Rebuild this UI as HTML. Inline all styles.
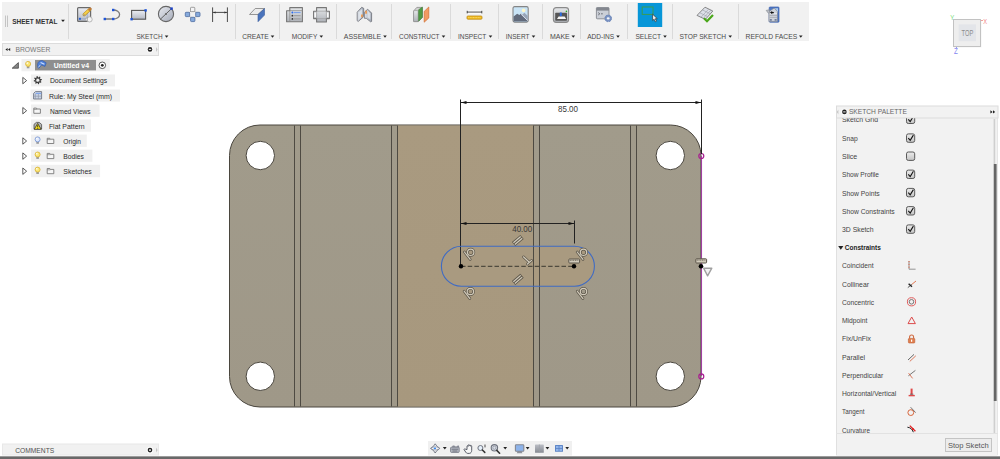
<!DOCTYPE html>
<html><head><meta charset="utf-8"><title>Sheet Metal Sketch</title>
<style>
html,body{margin:0;padding:0;background:#fff;}
body{width:1000px;height:459px;overflow:hidden;}
svg{display:block;font-family:"Liberation Sans", sans-serif;}
</style></head><body>
<svg width="1000" height="459" viewBox="0 0 1000 459">
<rect width="1000" height="459" fill="#fff"/>
<rect x="2" y="2" width="807" height="39" fill="#f1f1f1"/>
<line x1="68.5" y1="4" x2="68.5" y2="39" stroke="#dadada" stroke-width="1"/>
<line x1="235.5" y1="4" x2="235.5" y2="39" stroke="#dadada" stroke-width="1"/>
<line x1="279.5" y1="4" x2="279.5" y2="39" stroke="#dadada" stroke-width="1"/>
<line x1="336.5" y1="4" x2="336.5" y2="39" stroke="#dadada" stroke-width="1"/>
<line x1="391.5" y1="4" x2="391.5" y2="39" stroke="#dadada" stroke-width="1"/>
<line x1="450.5" y1="4" x2="450.5" y2="39" stroke="#dadada" stroke-width="1"/>
<line x1="498.5" y1="4" x2="498.5" y2="39" stroke="#dadada" stroke-width="1"/>
<line x1="542.5" y1="4" x2="542.5" y2="39" stroke="#dadada" stroke-width="1"/>
<line x1="580.5" y1="4" x2="580.5" y2="39" stroke="#dadada" stroke-width="1"/>
<line x1="627.5" y1="4" x2="627.5" y2="39" stroke="#dadada" stroke-width="1"/>
<line x1="672.5" y1="4" x2="672.5" y2="39" stroke="#dadada" stroke-width="1"/>
<line x1="738.5" y1="4" x2="738.5" y2="39" stroke="#dadada" stroke-width="1"/>
<line x1="5.5" y1="15.5" x2="5.5" y2="27" stroke="#c4c4c4"/><line x1="7.5" y1="15.5" x2="7.5" y2="27" stroke="#c4c4c4"/>
<text x="12.2" y="24.3" font-size="7.8" fill="#333" textLength="45.3" lengthAdjust="spacingAndGlyphs" font-weight="bold" >SHEET METAL</text>
<path d="M61.1 19.7h3.8l-1.9 2.4z" fill="#222"/>
<text x="136.5" y="38.8" font-size="7.4" fill="#4a4a4a" textLength="26.1" lengthAdjust="spacingAndGlyphs" >SKETCH</text>
<path d="M164.79999999999998 35.45h3.6l-1.8 2.3z" fill="#222"/>
<text x="242.2" y="38.8" font-size="7.4" fill="#4a4a4a" textLength="26.5" lengthAdjust="spacingAndGlyphs" >CREATE</text>
<path d="M270.7 35.45h3.6l-1.8 2.3z" fill="#222"/>
<text x="291.7" y="38.8" font-size="7.4" fill="#4a4a4a" textLength="25.6" lengthAdjust="spacingAndGlyphs" >MODIFY</text>
<path d="M319.5 35.45h3.6l-1.8 2.3z" fill="#222"/>
<text x="343.8" y="38.8" font-size="7.4" fill="#4a4a4a" textLength="37.4" lengthAdjust="spacingAndGlyphs" >ASSEMBLE</text>
<path d="M383.2 35.45h3.6l-1.8 2.3z" fill="#222"/>
<text x="399" y="38.8" font-size="7.4" fill="#4a4a4a" textLength="40.5" lengthAdjust="spacingAndGlyphs" >CONSTRUCT</text>
<path d="M441.7 35.45h3.6l-1.8 2.3z" fill="#222"/>
<text x="457.9" y="38.8" font-size="7.4" fill="#4a4a4a" textLength="28.4" lengthAdjust="spacingAndGlyphs" >INSPECT</text>
<path d="M488.7 35.45h3.6l-1.8 2.3z" fill="#222"/>
<text x="505.8" y="38.8" font-size="7.4" fill="#4a4a4a" textLength="23.7" lengthAdjust="spacingAndGlyphs" >INSERT</text>
<path d="M531.7 35.45h3.6l-1.8 2.3z" fill="#222"/>
<text x="550" y="38.8" font-size="7.4" fill="#4a4a4a" textLength="19.7" lengthAdjust="spacingAndGlyphs" >MAKE</text>
<path d="M571.5 35.45h3.6l-1.8 2.3z" fill="#222"/>
<text x="587.2" y="38.8" font-size="7.4" fill="#4a4a4a" textLength="27.0" lengthAdjust="spacingAndGlyphs" >ADD-INS</text>
<path d="M616.2 35.45h3.6l-1.8 2.3z" fill="#222"/>
<text x="635.4" y="38.8" font-size="7.4" fill="#4a4a4a" textLength="25.6" lengthAdjust="spacingAndGlyphs" >SELECT</text>
<path d="M663.2 35.45h3.6l-1.8 2.3z" fill="#222"/>
<text x="679.4" y="38.8" font-size="7.4" fill="#4a4a4a" textLength="46.8" lengthAdjust="spacingAndGlyphs" >STOP SKETCH</text>
<path d="M728.4000000000001 35.45h3.6l-1.8 2.3z" fill="#222"/>
<text x="745.5" y="38.8" font-size="7.4" fill="#4a4a4a" textLength="51.7" lengthAdjust="spacingAndGlyphs" >REFOLD FACES</text>
<path d="M799.0 35.45h3.6l-1.8 2.3z" fill="#222"/>
<defs>
<linearGradient id="gA" x1="0" y1="0" x2="0" y2="1"><stop offset="0" stop-color="#eceef3"/><stop offset="1" stop-color="#b4b9c4"/></linearGradient>
<linearGradient id="gB" x1="0" y1="0" x2="0" y2="1"><stop offset="0" stop-color="#e6e8ea"/><stop offset="1" stop-color="#aeb2b8"/></linearGradient>
<linearGradient id="gC" x1="0" y1="0" x2="1" y2="1"><stop offset="0" stop-color="#e8eaf0"/><stop offset="1" stop-color="#a4aab8"/></linearGradient>
</defs>
<!-- create sketch -->
<rect x="77.6" y="7.6" width="13" height="13.8" rx="1" fill="url(#gA)" stroke="#6a6a6a" stroke-width="1.2"/>
<path d="M80 18.8h7.2v-6" fill="none" stroke="#8aa0d0" stroke-width="0.7"/>
<rect x="78.9" y="17.8" width="2" height="2" fill="#2a5fd0"/>
<path d="M84.2 14.6l5.6-5.2" stroke="#b88a20" stroke-width="3.2" stroke-linecap="round"/>
<path d="M84.2 14.6l5.4-5" stroke="#f6d04a" stroke-width="2" stroke-linecap="round"/>
<path d="M89.3 9.8l1.2-1.1" stroke="#c07838" stroke-width="2.2" stroke-linecap="round"/>
<path d="M83.4 15.6l1.6-0.4l-1.2-1.2z" fill="#f0e0c0" stroke="#777" stroke-width="0.4"/>
<circle cx="89.6" cy="19.4" r="2.6" fill="#f4f4f4" stroke="#aaa" stroke-width="0.8"/>
<path d="M87.4 17.2v4.4l-2.2-2.2z" fill="#e8e8e8" stroke="#999" stroke-width="0.6"/>
<!-- line/arc -->
<path d="M104.8 19h8.4a6.4 4.5 0 0 0 0 -9" fill="none" stroke="#7a7a7a" stroke-width="1.3"/>
<rect x="103.6" y="17.8" width="2.4" height="2.4" fill="#1f55d8"/><rect x="112" y="17.8" width="2.4" height="2.4" fill="#1f55d8"/><rect x="112" y="8.8" width="2.4" height="2.4" fill="#1f55d8"/>
<!-- rectangle -->
<rect x="131.6" y="10.4" width="14" height="8.8" fill="url(#gA)" stroke="#555" stroke-width="1.1"/>
<rect x="130.4" y="18" width="2.4" height="2.4" fill="#1f55d8"/><rect x="144.4" y="9.2" width="2.4" height="2.4" fill="#1f55d8"/>
<!-- circle -->
<circle cx="166" cy="14" r="7.6" fill="url(#gC)" stroke="#666" stroke-width="1.1"/>
<path d="M160.4 19.2l11.2-10.6" stroke="#555" stroke-width="0.9"/>
<circle cx="166" cy="14" r="1" fill="#666"/>
<rect x="170.4" y="7.4" width="2.4" height="2.4" fill="#1a40c8"/>
<!-- pattern -->
<path d="M192.7 9.4l5.2 5l-5.1 5l-5.3-5z" fill="none" stroke="#8a8a8a" stroke-width="0.8"/>
<rect x="190.5" y="7.3" width="4.3" height="4.3" rx="0.8" fill="#f4f4f6" stroke="#8a8a8a" stroke-width="0.8"/>
<rect x="185.3" y="12.3" width="4.3" height="4.3" rx="0.8" fill="#86aadc" stroke="#4a6aa0" stroke-width="0.8"/>
<rect x="195.7" y="12.3" width="4.3" height="4.3" rx="0.8" fill="#86aadc" stroke="#4a6aa0" stroke-width="0.8"/>
<rect x="190.6" y="17.3" width="4.3" height="4.3" rx="0.8" fill="#86aadc" stroke="#4a6aa0" stroke-width="0.8"/>
<!-- dimension -->
<path d="M212.6 7.4v14.6M227.4 7.4v14.6M212.6 12.4h14.8" stroke="#4a4a4a" stroke-width="1" fill="none"/>
<path d="M213 12.4l2.6-1v2zM227 12.4l-2.6-1v2z" fill="#333"/>
<!-- create flange -->
<path d="M249.5 14.5l5.7-6h9.3l-6.5 6z" fill="#ececec" stroke="#8a8a8a" stroke-width="0.9" stroke-linejoin="round"/>
<path d="M258 14.5l6.5-6v6.6l-6.5 6.6z" fill="#4a74bc" stroke="#3a5c9c" stroke-width="0.6" stroke-linejoin="round"/>
<!-- modify 1 -->
<path d="M289.8 7.6h12.6v14.2h-15.8v-11h3.2z" fill="url(#gB)" stroke="#777" stroke-width="1.1" stroke-linejoin="round"/>
<path d="M289.8 10.8v11M289.8 10.6h12.6" stroke="#8a8a8a" stroke-width="0.7" fill="none"/>
<path d="M294 12.5h6.6" stroke="#7aa0e8" stroke-width="1.2"/><path d="M294 15.7h6.6M294 18.9h6.6" stroke="#999" stroke-width="1"/>
<circle cx="292.4" cy="12.5" r="1" fill="#2a6cf0"/><circle cx="292.4" cy="15.7" r="0.9" fill="#333"/><circle cx="292.4" cy="18.9" r="0.9" fill="#333"/>
<!-- modify 2 -->
<path d="M316.6 7.6h9.8v3.6h3v7.4h-3v3.4h-9.8v-3.4h-3v-7.4h3z" fill="url(#gB)" stroke="#777" stroke-width="1.1" stroke-linejoin="round"/>
<path d="M316.6 11.2v7.4M326.4 11.2v7.4M316.6 11.2h9.8M316.6 18.6h9.8" stroke="#999" stroke-width="0.6"/>
<rect x="314.4" y="12.6" width="1.6" height="4.6" fill="#fafafa"/><rect x="327" y="12.6" width="1.6" height="4.6" fill="#fafafa"/>
<!-- assemble -->
<defs><linearGradient id="gD" x1="0" y1="0" x2="1" y2="0"><stop offset="0" stop-color="#dfe3ea"/><stop offset="1" stop-color="#9aa2b0"/></linearGradient></defs>
<path d="M357.2 12.2l4.5-4.9l2 1v6.8l-0.8 2.4l-4.8 4l-0.9-0.8z" fill="url(#gD)" stroke="#6c6f76" stroke-width="0.8" stroke-linejoin="round"/>
<path d="M358.6 12.6l3.6-3.8v7.6l-3.6 3.4z" fill="#e4e8ee" opacity="0.8"/>
<path d="M364.4 12.2l3.3-3l3.9 3.9v8.3l-1 0.4l-4.3-3.5h-1.9z" fill="url(#gD)" stroke="#6c6f76" stroke-width="0.8" stroke-linejoin="round"/>
<path d="M367.6 10.6l2.8 3v6l-2.8-2.4z" fill="#e4e8ee" opacity="0.8"/>
<path d="M361.2 14.6h1.5v2.6h-1.5z" fill="#f0903a"/><path d="M365.3 10.8h1.5v3h-1.5z" fill="#f0903a"/>
<!-- construct -->
<path d="M413.6 11l3.2-3.6h5.6v10l-4 4.2h-4.8z" fill="#d0d0d0" stroke="#8a8a8a" stroke-width="0.8" stroke-linejoin="round"/>
<rect x="413.6" y="10.6" width="4.6" height="11" rx="1" fill="url(#gB)" stroke="#8a8a8a" stroke-width="0.6"/>
<path d="M418.6 9.8l3.8-2.8v10.4l-3.8 3.8z" fill="#4f9a44" stroke="#3c7c34" stroke-width="0.5"/>
<path d="M424.2 11.4l4.6-4.4v11l-4.6 4.2z" fill="#f19a62" stroke="#d07032" stroke-width="0.7" stroke-linejoin="round"/>
<!-- inspect -->
<rect x="466.2" y="10.4" width="16.4" height="3.4" rx="1" fill="#fbfbfb"/>
<path d="M467 12.1h15" stroke="#8a8a8a" stroke-width="1.5"/><path d="M467.2 10.8v2.6M481.8 10.8v2.6" stroke="#444" stroke-width="1"/>
<rect x="467" y="16" width="15" height="3.2" rx="0.9" fill="#f3bd22" stroke="#bf8a14" stroke-width="0.8"/>
<path d="M468.2 17.6h12.6" stroke="#fbe27a" stroke-width="0.7" stroke-dasharray="1 0.6"/>
<!-- insert -->
<rect x="513" y="6.6" width="15.2" height="15.6" rx="1.6" fill="#c9e4f6" stroke="#858585" stroke-width="1.1"/>
<path d="M513.6 16.6l3.6-2.8l2.2 1.2l1.6-1.4l6.6 7v1h-14z" fill="#626b7c"/>
<path d="M521.4 15.2l3-2.4l3.2 3v4.6z" fill="#98a5b8"/>
<path d="M520.8 13.6l6.8 7" stroke="#e8eef4" stroke-width="0.8"/>
<circle cx="523.6" cy="10.4" r="1.8" fill="#fdf6c8"/>
<!-- make -->
<rect x="553.4" y="7.6" width="15.2" height="14.8" rx="2.8" fill="url(#gB)" stroke="#8a8a8a" stroke-width="1.1"/>
<rect x="555.2" y="12.8" width="11.8" height="8" rx="0.8" fill="#565656"/>
<path d="M557 19l1.6-2.6h6l1.6 2.6z" fill="#f4f4f4"/>
<path d="M559.8 12.6h2v2.6l-1 1.4l-1-1.4z" fill="#2a6ce0"/>
<circle cx="566.4" cy="11.4" r="0.8" fill="#28a828"/>
<!-- add-ins -->
<rect x="596.4" y="7.6" width="12.6" height="11.2" rx="0.8" fill="#cbcfd7" stroke="#858890" stroke-width="0.9"/>
<rect x="596.4" y="7.6" width="12.6" height="3" fill="#83878f"/>
<path d="M598.2 12.6l1.6 1.2l-1.6 1.2M601 13.8h1.8" stroke="#5a5e66" stroke-width="0.8" fill="none"/>
<circle cx="608.2" cy="18.4" r="3.3" fill="#7a92c2" stroke="#6480b4" stroke-width="0.9" stroke-dasharray="1.6 1"/>
<ellipse cx="608.2" cy="18.4" rx="1.5" ry="1.1" fill="#f4f6fa"/>
<!-- select -->
<rect x="637.8" y="3" width="24.4" height="24" fill="#0796d8"/>
<rect x="642.2" y="7" width="10.8" height="7.4" fill="#0a9ae0" stroke="#3a9c50" stroke-width="1"/>
<path d="M652.6 14.2v6.4l1.5-1.4l1.2 2.6l1.2-0.6l-1.2-2.5h2z" fill="#f2f2f2" stroke="#333" stroke-width="0.7" stroke-linejoin="round"/>
<!-- stop sketch -->
<path d="M697 15.4l8-8.2l7.8 3.8l-7.4 8.4z" fill="#dde0e8" stroke="#7c7c7c" stroke-width="0.9" stroke-linejoin="round"/>
<path d="M699.7 12.7l8 4M702.4 9.9l7.9 3.9M700.9 17.3l7.8-8.2M703.2 18.4l7.7-8.3" stroke="#9a9ea8" stroke-width="0.6"/>
<path d="M704 18.2l3 3l6-6.2" fill="none" stroke="#4aa71a" stroke-width="2.2"/>
<!-- refold -->
<rect x="769.2" y="7" width="9.8" height="15.2" rx="0.8" fill="#4d78c6" stroke="#3c60aa" stroke-width="0.7"/>
<path d="M774.4 8.2h3.6v4.4h-3.6z" fill="#a8c8ee"/>
<path d="M769 11.4l2.6-1.6l2.6-1.8l3.2 3.6v9.8h-8.4z" fill="#cfd3da" stroke="#7d818a" stroke-width="0.6" stroke-linejoin="round"/>
<path d="M766.2 10.4l3.2-0.6l0.4 3.6l-1.6-0.4z" fill="#b9bdc6" stroke="#80848c" stroke-width="0.6" stroke-linejoin="round"/>
<path d="M769.6 15.4h7.4M769.6 17.4h7.4" stroke="#a2a6ae" stroke-width="0.8"/>
<path d="M769.6 13.6h7.4" stroke="#eceef2" stroke-width="0.8"/>
<path d="M770 12.6l2.2-1.7v1.1h1.6v1.2h-1.6v1.1z" fill="#111"/>
<rect x="769.8" y="19.2" width="2" height="1.4" fill="#5a6a8c"/><rect x="774.6" y="19.2" width="2" height="1.4" fill="#5a6a8c"/>

<rect x="2.5" y="43.5" width="156" height="12" fill="#f1f1f1" stroke="#dcdcdc" stroke-width="1"/>
<path d="M7.6 47.9v3.2l-2.2-1.6zM10.2 47.9v3.2l-2.2-1.6z" fill="#222"/>
<text x="15.4" y="52.2" font-size="7" fill="#777" textLength="34.9" lengthAdjust="spacingAndGlyphs" >BROWSER</text>
<circle cx="150" cy="49.4" r="3.4" fill="#fafafa"/><circle cx="150" cy="49.4" r="2.3" fill="#222"/><rect x="148.8" y="48.9" width="2.4" height="1" fill="#eee"/>
<path d="M156 47v5l1.6-2.5z" fill="#c4c4c4"/>
<rect x="21.5" y="59" width="88.3" height="12.3" fill="#f0f0f0"/>
<rect x="31" y="74.5" width="84" height="11.9" fill="#f0f0f0"/>
<rect x="30.5" y="89.5" width="89.5" height="12.1" fill="#f0f0f0"/>
<rect x="31" y="104.5" width="68.6" height="12.3" fill="#f0f0f0"/>
<rect x="31" y="119.5" width="60" height="12.2" fill="#f0f0f0"/>
<rect x="31" y="134.6" width="55.8" height="12.3" fill="#f0f0f0"/>
<rect x="31" y="149.6" width="61.4" height="12.2" fill="#f0f0f0"/>
<rect x="31" y="164.8" width="69.1" height="12.4" fill="#f0f0f0"/>
<rect x="35" y="60" width="61" height="10.4" fill="#8e8e8e"/>
<text x="53.8" y="68.1" font-size="7" fill="#fff" textLength="35.2" lengthAdjust="spacingAndGlyphs" font-weight="bold" >Untitled v4</text>
<path d="M18.4 62.6v5.6h-6.2z" fill="#888" stroke="#333" stroke-width="0.7"/>
<circle cx="102.3" cy="65.3" r="3.3" fill="#fff" stroke="#333" stroke-width="0.8"/><circle cx="102.3" cy="65.3" r="1.4" fill="#222"/>
<text x="49.9" y="83.4" font-size="7.4" fill="#2a2a2a" textLength="57.3" lengthAdjust="spacingAndGlyphs" >Document Settings</text>
<text x="48.9" y="98.5" font-size="7.4" fill="#2a2a2a" textLength="63.3" lengthAdjust="spacingAndGlyphs" >Rule: My Steel (mm)</text>
<text x="49.9" y="113.5" font-size="7.4" fill="#2a2a2a" textLength="40.8" lengthAdjust="spacingAndGlyphs" >Named Views</text>
<text x="48.9" y="128.6" font-size="7.4" fill="#2a2a2a" textLength="35.8" lengthAdjust="spacingAndGlyphs" >Flat Pattern</text>
<text x="63.3" y="143.8" font-size="7.4" fill="#2a2a2a" textLength="17.7" lengthAdjust="spacingAndGlyphs" >Origin</text>
<text x="63.3" y="158.8" font-size="7.4" fill="#2a2a2a" textLength="20.6" lengthAdjust="spacingAndGlyphs" >Bodies</text>
<text x="63.3" y="173.9" font-size="7.4" fill="#2a2a2a" textLength="28.5" lengthAdjust="spacingAndGlyphs" >Sketches</text>
<path d="M22.8 77.39999999999999v6.4l3.8-3.2z" fill="#fff" stroke="#333" stroke-width="0.8" stroke-linejoin="round"/>
<path d="M22.8 107.5v6.4l3.8-3.2z" fill="#fff" stroke="#333" stroke-width="0.8" stroke-linejoin="round"/>
<path d="M22.8 137.8v6.4l3.8-3.2z" fill="#fff" stroke="#333" stroke-width="0.8" stroke-linejoin="round"/>
<path d="M22.8 152.9v6.4l3.8-3.2z" fill="#fff" stroke="#333" stroke-width="0.8" stroke-linejoin="round"/>
<path d="M22.8 168.0v6.4l3.8-3.2z" fill="#fff" stroke="#333" stroke-width="0.8" stroke-linejoin="round"/>
<path d="M26.8 66.1h2.6v2.2h-2.6z" fill="#9a9a9a"/>
<circle cx="28.1" cy="63.9" r="2.5" fill="#fbe778" stroke="#d8b030" stroke-width="0.8"/>
<circle cx="27.3" cy="63.1" r="0.9" fill="#fff" opacity="0.8"/>
<path d="M37.6 64.2c0.4-2.6 2.6-4 4.8-3.6l3.8 2.2l-1.2 3.6l-3.6-1.4l-2.4 3.2l-1.2-0.6z" fill="#4f80d8" stroke="#2f58a8" stroke-width="0.6" stroke-linejoin="round"/>
<path d="M40.6 62.4l3.8 1.8" stroke="#cfe0ff" stroke-width="1.1"/>
<path d="M38.4 67.4l2-2.6" stroke="#e8e8e8" stroke-width="0.8"/>
<path d="M41.70 78.92L41.89 79.89L40.69 80.42L40.56 81.10L41.46 82.05L40.91 82.87L39.69 82.40L39.11 82.79L39.08 84.10L38.11 84.29L37.58 83.09L36.90 82.96L35.95 83.86L35.13 83.31L35.60 82.09L35.21 81.51L33.90 81.48L33.71 80.51L34.91 79.98L35.04 79.30L34.14 78.35L34.69 77.53L35.91 78.00L36.49 77.61L36.52 76.30L37.49 76.11L38.02 77.31L38.70 77.44L39.65 76.54L40.47 77.09L40.00 78.31L40.39 78.89z" fill="#3a3a3a"/>
<circle cx="37.8" cy="80.2" r="1.9" fill="#f0f0f0"/><circle cx="37.8" cy="80.2" r="1.9" fill="none" stroke="#3a3a3a" stroke-width="0.5"/>
<path d="M35.4 91.6h6.2v7.4h-8v-5.6z" fill="#c9d3e4" stroke="#707784" stroke-width="0.9" stroke-linejoin="round"/>
<path d="M35.4 93.6v5.4M38.4 93.6v5.4M33.8 96.2h7.6" stroke="#8b93a4" stroke-width="0.6"/><path d="M35.8 93.4h5.4" stroke="#7da3ea" stroke-width="1.1"/>
<path d="M33.8 108.1h2.6l0.6 0.9h3.4v4.3h-6.6z" fill="#f6f6f6" stroke="#6a6a6a" stroke-width="0.8" stroke-linejoin="round"/>
<path d="M33.8 109.39999999999999h3.2" stroke="#6a6a6a" stroke-width="0.6"/>
<path d="M34 129v-4.6l2.4-2h2.8l2.4 2v4.6z" fill="#b8b8b8" stroke="#4a4a4a" stroke-width="0.8" stroke-linejoin="round"/>
<path d="M37.7 123.4l3.5 5.9h-7z" fill="#f8e21c" stroke="#222" stroke-width="0.7" stroke-linejoin="round"/>
<path d="M37.7 125.2v2.2M37.7 128v0.7" stroke="#111" stroke-width="0.8"/>
<path d="M36.300000000000004 141.6h2.6v2.2h-2.6z" fill="#9a9a9a"/>
<circle cx="37.6" cy="139.4" r="2.5" fill="#dfe8fb" stroke="#6f8fd0" stroke-width="0.8"/>
<circle cx="36.800000000000004" cy="138.6" r="0.9" fill="#fff" opacity="0.8"/>
<path d="M36.300000000000004 156.7h2.6v2.2h-2.6z" fill="#9a9a9a"/>
<circle cx="37.6" cy="154.5" r="2.5" fill="#fbe778" stroke="#d8b030" stroke-width="0.8"/>
<circle cx="36.800000000000004" cy="153.7" r="0.9" fill="#fff" opacity="0.8"/>
<path d="M36.300000000000004 171.79999999999998h2.6v2.2h-2.6z" fill="#9a9a9a"/>
<circle cx="37.6" cy="169.6" r="2.5" fill="#fbe778" stroke="#d8b030" stroke-width="0.8"/>
<circle cx="36.800000000000004" cy="168.79999999999998" r="0.9" fill="#fff" opacity="0.8"/>
<path d="M47.2 138.3h2.6l0.6 0.9h3.4v4.3h-6.6z" fill="#f6f6f6" stroke="#6a6a6a" stroke-width="0.8" stroke-linejoin="round"/>
<path d="M47.2 139.6h3.2" stroke="#6a6a6a" stroke-width="0.6"/>
<path d="M47.2 153.4h2.6l0.6 0.9h3.4v4.3h-6.6z" fill="#f6f6f6" stroke="#6a6a6a" stroke-width="0.8" stroke-linejoin="round"/>
<path d="M47.2 154.7h3.2" stroke="#6a6a6a" stroke-width="0.6"/>
<path d="M47.2 168.5h2.6l0.6 0.9h3.4v4.3h-6.6z" fill="#f6f6f6" stroke="#6a6a6a" stroke-width="0.8" stroke-linejoin="round"/>
<path d="M47.2 169.79999999999998h3.2" stroke="#6a6a6a" stroke-width="0.6"/>
<rect x="2.5" y="444" width="156" height="11" fill="#f1f1f1" stroke="#e8e8e8" stroke-width="1"/>
<text x="15.2" y="452.6" font-size="7.2" fill="#505050" textLength="39" lengthAdjust="spacingAndGlyphs" >COMMENTS</text>
<circle cx="150" cy="450.1" r="3.4" fill="#fafafa"/><circle cx="150" cy="450.1" r="2.3" fill="#222"/><rect x="149.1" y="449.3" width="1.8" height="1.6" fill="#eee"/>
<path d="M156 447.6v5l1.6-2.5z" fill="#c4c4c4"/>
<defs><linearGradient id="pg" x1="0" y1="0" x2="0" y2="1"><stop offset="0" stop-color="#a19b8b"/><stop offset="1" stop-color="#9f9888"/></linearGradient><linearGradient id="tg" x1="0" y1="0" x2="0" y2="1"><stop offset="0" stop-color="#a99a80"/><stop offset="1" stop-color="#a7987e"/></linearGradient></defs>
<rect x="229.5" y="125" width="471.5" height="282" rx="30.5" ry="30.5" fill="url(#pg)" stroke="#4a463e" stroke-width="1"/>
<rect x="397.5" y="125.5" width="136" height="281" fill="url(#tg)"/>
<rect x="441.4" y="246.3" width="153" height="40" rx="20" fill="#a99a80"/>
<line x1="294.5" y1="125.5" x2="294.5" y2="406.5" stroke="#4e4a42" stroke-width="1"/>
<line x1="300.5" y1="125.5" x2="300.5" y2="406.5" stroke="#4e4a42" stroke-width="1"/>
<line x1="391.5" y1="125.5" x2="391.5" y2="406.5" stroke="#4e4a42" stroke-width="1"/>
<line x1="397.5" y1="125.5" x2="397.5" y2="406.5" stroke="#4e4a42" stroke-width="1"/>
<line x1="533.5" y1="125.5" x2="533.5" y2="406.5" stroke="#4e4a42" stroke-width="1"/>
<line x1="539.5" y1="125.5" x2="539.5" y2="406.5" stroke="#4e4a42" stroke-width="1"/>
<line x1="630.5" y1="125.5" x2="630.5" y2="406.5" stroke="#4e4a42" stroke-width="1"/>
<line x1="636.5" y1="125.5" x2="636.5" y2="406.5" stroke="#4e4a42" stroke-width="1"/>
<circle cx="260.3" cy="155.5" r="14.2" fill="#fff" stroke="#4a463e" stroke-width="1"/>
<circle cx="670.3" cy="155.5" r="14.2" fill="#fff" stroke="#4a463e" stroke-width="1"/>
<circle cx="260.3" cy="376.3" r="14.2" fill="#fff" stroke="#4a463e" stroke-width="1"/>
<circle cx="670.3" cy="376.3" r="14.2" fill="#fff" stroke="#4a463e" stroke-width="1"/>
<line x1="701.5" y1="156" x2="701.5" y2="376" stroke="#a13fa1" stroke-width="1.1"/>
<circle cx="701.3" cy="156" r="2.5" fill="none" stroke="#a81c90" stroke-width="1.2"/><circle cx="701.3" cy="376.4" r="2.5" fill="none" stroke="#a81c90" stroke-width="1.2"/>
<g stroke="#222" stroke-width="1" fill="none"><line x1="460.5" y1="99.5" x2="460.5" y2="266"/><line x1="701.5" y1="99.5" x2="701.5" y2="154"/><line x1="460.5" y1="102.5" x2="701.5" y2="102.5"/><line x1="460.5" y1="223.5" x2="574" y2="223.5"/><line x1="574.5" y1="220.5" x2="574.5" y2="243.5"/></g>
<path d="M461 102.5l5.5-1.5v3zM701 102.5l-5.5-1.5v3zM461 223.5l5.5-1.5v3zM574 223.5l-5.5-1.5v3z" fill="#111"/>
<text x="558" y="111.6" font-size="8.3" fill="#383838" textLength="20" lengthAdjust="spacingAndGlyphs" >85.00</text>
<text x="512.2" y="232.4" font-size="8.3" fill="#383838" textLength="20" lengthAdjust="spacingAndGlyphs" >40.00</text>
<rect x="441.4" y="246.3" width="153" height="40" rx="20" fill="none" stroke="#3f6bc4" stroke-width="1.1"/>
<line x1="461" y1="266.3" x2="574" y2="266.3" stroke="#3a382f" stroke-width="1" stroke-dasharray="4.5 2.2"/>
<circle cx="461" cy="266.3" r="2.2" fill="#000"/><circle cx="574" cy="266.3" r="2.2" fill="#000"/><circle cx="701" cy="266.3" r="2.3" fill="#000"/>
<g fill="none" stroke="#5c564a" stroke-width="2.6" stroke-linecap="round"><circle cx="470.7" cy="252.3" r="3.2"/><path d="M464.4 252.0l5.8 7.4"/></g>
<g fill="none" stroke="#d2cbbb" stroke-width="1.2" stroke-linecap="round"><circle cx="470.7" cy="252.3" r="3.2"/><path d="M464.4 252.0l5.8 7.4"/></g>
<g fill="none" stroke="#5c564a" stroke-width="2.6" stroke-linecap="round"><circle cx="583.5" cy="252.3" r="3.2"/><path d="M577.2 252.0l5.8 7.4"/></g>
<g fill="none" stroke="#d2cbbb" stroke-width="1.2" stroke-linecap="round"><circle cx="583.5" cy="252.3" r="3.2"/><path d="M577.2 252.0l5.8 7.4"/></g>
<g fill="none" stroke="#5c564a" stroke-width="2.6" stroke-linecap="round"><circle cx="470.4" cy="291.5" r="3.2"/><path d="M464.09999999999997 291.2l5.8 7.4"/></g>
<g fill="none" stroke="#d2cbbb" stroke-width="1.2" stroke-linecap="round"><circle cx="470.4" cy="291.5" r="3.2"/><path d="M464.09999999999997 291.2l5.8 7.4"/></g>
<g fill="none" stroke="#5c564a" stroke-width="2.6" stroke-linecap="round"><circle cx="583.5" cy="291.5" r="3.2"/><path d="M577.2 291.2l5.8 7.4"/></g>
<g fill="none" stroke="#d2cbbb" stroke-width="1.2" stroke-linecap="round"><circle cx="583.5" cy="291.5" r="3.2"/><path d="M577.2 291.2l5.8 7.4"/></g>
<path d="M513.6 244.0L522.0 237.0" stroke="#5c564a" stroke-width="5.2"/>
<path d="M513.40 242.67L520.73 236.56" stroke="#d2cbbb" stroke-width="1.3"/>
<path d="M514.87 244.44L522.20 238.33" stroke="#d2cbbb" stroke-width="1.3"/>
<path d="M513.6 283.0L522.0 275.8" stroke="#5c564a" stroke-width="5.2"/>
<path d="M513.38 281.67L520.72 275.38" stroke="#d2cbbb" stroke-width="1.3"/>
<path d="M514.88 283.42L522.22 277.13" stroke="#d2cbbb" stroke-width="1.3"/>
<g fill="none" stroke="#5c564a" stroke-width="2.6" stroke-linecap="round"><path d="M523.4 256.8l5.6 5.2M527.4 264l4.2-3.6"/></g>
<g fill="none" stroke="#d2cbbb" stroke-width="1.2" stroke-linecap="round"><path d="M523.4 256.8l5.6 5.2M527.4 264l4.2-3.6"/></g>
<rect x="568.8" y="259" width="10.8" height="4" rx="0.8" fill="#d2cbbb" stroke="#5c564a" stroke-width="1"/>
<path d="M569.8 260.3h8.8" stroke="#5c564a" stroke-width="0.9" stroke-dasharray="1 0.7"/>
<rect x="695.8" y="258.8" width="10.8" height="4.2" rx="0.8" fill="#d2cbbb" stroke="#5c564a" stroke-width="1"/>
<path d="M696.8 260.1h8.8" stroke="#5c564a" stroke-width="0.9" stroke-dasharray="1 0.7"/>
<path d="M703.6 268.2h8.2l-4.2 7.6z" fill="#f2f2f2" stroke="#a0a0a0" stroke-width="1.4" stroke-linejoin="round"/>
<rect x="954" y="20.2" width="27.4" height="27.2" fill="#e4e4e4" opacity="0.6"/><rect x="953.5" y="19.5" width="27" height="27" fill="#eeeeee" stroke="#c2c2c2" stroke-width="1"/>
<rect x="958.6" y="24.4" width="17.4" height="16.8" fill="#e3e5e9"/>
<text x="961.6" y="35.7" font-size="8.2" fill="#8c8c8c" textLength="11.7" lengthAdjust="spacingAndGlyphs" >TOP</text>
<text x="950.3" y="20" font-size="7.2" fill="#78dc78" textLength="4" lengthAdjust="spacingAndGlyphs" >Y</text>
<text x="983.3" y="24.4" font-size="7.4" fill="#f07f7f" textLength="3.8" lengthAdjust="spacingAndGlyphs" >X</text>
<text x="954" y="53.8" font-size="8.8" fill="#8484f0" textLength="3.8" lengthAdjust="spacingAndGlyphs" >Z</text>
<line x1="981" y1="20.5" x2="983" y2="20.5" stroke="#f0a0a0"/><line x1="956.5" y1="47" x2="956.5" y2="49" stroke="#9a9af0"/>
<rect x="836" y="118" width="161.5" height="338" fill="#f2f2f2"/>
<line x1="836.5" y1="118" x2="836.5" y2="455" stroke="#e0e0e0"/><line x1="997.5" y1="118" x2="997.5" y2="455" stroke="#e6e6e6"/>
<rect x="836.5" y="106" width="161.5" height="12" fill="#f2f2f2" stroke="#dcdcdc" stroke-width="1"/>
<path d="M838.4 109.4v5l-1.6-2.5z" fill="#c4c4c4"/>
<circle cx="844.4" cy="111.9" r="3.3" fill="#fafafa"/><circle cx="844.4" cy="111.9" r="2.3" fill="#222"/><rect x="843.2" y="111.4" width="2.4" height="1" fill="#eee"/>
<text x="848.9" y="114.3" font-size="7" fill="#666" textLength="58" lengthAdjust="spacingAndGlyphs" >SKETCH PALETTE</text>
<path d="M990.4 110.3v3.2l2.2-1.6zM993 110.3v3.2l2.2-1.6z" fill="#222"/>
<defs><linearGradient id="cb" x1="0" y1="0" x2="0" y2="1"><stop offset="0" stop-color="#ececec"/><stop offset="1" stop-color="#c4c4c4"/></linearGradient></defs>
<clipPath id="pc"><rect x="836" y="118.2" width="162" height="314.8"/></clipPath><g clip-path="url(#pc)">
<text x="842" y="122.4" font-size="7.3" fill="#444" textLength="36" lengthAdjust="spacingAndGlyphs" >Sketch Grid</text>
<rect x="906.5" y="115.1" width="8.2" height="8.4" rx="1.8" fill="url(#cb)" stroke="#5a5a5a" stroke-width="1"/>
<path d="M908.3 119.3l1.9 2.2l3.2-5.2" fill="none" stroke="#111" stroke-width="1.1"/>
<text x="842" y="141.2" font-size="7.3" fill="#444" textLength="15.6" lengthAdjust="spacingAndGlyphs" >Snap</text>
<rect x="906.5" y="133.9" width="8.2" height="8.4" rx="1.8" fill="url(#cb)" stroke="#5a5a5a" stroke-width="1"/>
<path d="M908.3 138.1l1.9 2.2l3.2-5.2" fill="none" stroke="#111" stroke-width="1.1"/>
<text x="842" y="159.3" font-size="7.3" fill="#444" textLength="15.2" lengthAdjust="spacingAndGlyphs" >Slice</text>
<rect x="906.5" y="152.0" width="8.2" height="8.4" rx="1.8" fill="url(#cb)" stroke="#5a5a5a" stroke-width="1"/>
<text x="842" y="177.4" font-size="7.3" fill="#444" textLength="37" lengthAdjust="spacingAndGlyphs" >Show Profile</text>
<rect x="906.5" y="170.1" width="8.2" height="8.4" rx="1.8" fill="url(#cb)" stroke="#5a5a5a" stroke-width="1"/>
<path d="M908.3 174.29999999999998l1.9 2.2l3.2-5.2" fill="none" stroke="#111" stroke-width="1.1"/>
<text x="842" y="195.7" font-size="7.3" fill="#444" textLength="37.7" lengthAdjust="spacingAndGlyphs" >Show Points</text>
<rect x="906.5" y="188.4" width="8.2" height="8.4" rx="1.8" fill="url(#cb)" stroke="#5a5a5a" stroke-width="1"/>
<path d="M908.3 192.6l1.9 2.2l3.2-5.2" fill="none" stroke="#111" stroke-width="1.1"/>
<text x="842" y="213.9" font-size="7.3" fill="#444" textLength="52.7" lengthAdjust="spacingAndGlyphs" >Show Constraints</text>
<rect x="906.5" y="206.6" width="8.2" height="8.4" rx="1.8" fill="url(#cb)" stroke="#5a5a5a" stroke-width="1"/>
<path d="M908.3 210.79999999999998l1.9 2.2l3.2-5.2" fill="none" stroke="#111" stroke-width="1.1"/>
<text x="842" y="232.2" font-size="7.3" fill="#444" textLength="31.6" lengthAdjust="spacingAndGlyphs" >3D Sketch</text>
<rect x="906.5" y="224.9" width="8.2" height="8.4" rx="1.8" fill="url(#cb)" stroke="#5a5a5a" stroke-width="1"/>
<path d="M908.3 229.1l1.9 2.2l3.2-5.2" fill="none" stroke="#111" stroke-width="1.1"/>
<path d="M838.2 245.9h5.2l-2.6 3.9z" fill="#222"/>
<text x="844.8" y="250.3" font-size="7.2" fill="#222" textLength="36" lengthAdjust="spacingAndGlyphs" font-weight="bold" >Constraints</text>
<text x="842" y="268.4" font-size="7.3" fill="#444" textLength="31.5" lengthAdjust="spacingAndGlyphs" >Coincident</text>
<text x="842" y="286.6" font-size="7.3" fill="#444" textLength="27" lengthAdjust="spacingAndGlyphs" >Collinear</text>
<text x="842" y="304.8" font-size="7.3" fill="#444" textLength="32" lengthAdjust="spacingAndGlyphs" >Concentric</text>
<text x="842" y="323.1" font-size="7.3" fill="#444" textLength="25.5" lengthAdjust="spacingAndGlyphs" >Midpoint</text>
<text x="842" y="341.4" font-size="7.3" fill="#444" textLength="29" lengthAdjust="spacingAndGlyphs" >Fix/UnFix</text>
<text x="842" y="359.6" font-size="7.3" fill="#444" textLength="23" lengthAdjust="spacingAndGlyphs" >Parallel</text>
<text x="842" y="377.8" font-size="7.3" fill="#444" textLength="41.3" lengthAdjust="spacingAndGlyphs" >Perpendicular</text>
<text x="842" y="396.1" font-size="7.3" fill="#444" textLength="54.3" lengthAdjust="spacingAndGlyphs" >Horizontal/Vertical</text>
<text x="842" y="414.4" font-size="7.3" fill="#444" textLength="22.4" lengthAdjust="spacingAndGlyphs" >Tangent</text>
<text x="842" y="432.8" font-size="7.3" fill="#444" textLength="28" lengthAdjust="spacingAndGlyphs" >Curvature</text>
<path d="M909 261v8.2h6.6" fill="none" stroke="#8a8a8a" stroke-width="0.9"/><path d="M909 261v8.2" stroke="#e06040" stroke-width="0.9" stroke-dasharray="1.2 1.6"/>
<path d="M907.8 287.6l4-3.2" stroke="#444" stroke-width="0.9"/><path d="M911.8 284.4l4.2-3.4" stroke="#e06a40" stroke-width="0.9"/><path d="M908.6 283.8l3.4 3" stroke="#222" stroke-width="1.4"/>
<circle cx="911.5" cy="301.8" r="4.1" fill="none" stroke="#e05a5a" stroke-width="1"/><circle cx="911.5" cy="301.8" r="2.3" fill="#eee" stroke="#777" stroke-width="1"/>
<path d="M911.7 317l3.7 6.6h-7.4z" fill="none" stroke="#dc4a4a" stroke-width="1"/>
<path d="M909.6 338.6v-1.6a2 2 0 0 1 4 0v1.6" fill="none" stroke="#d06a40" stroke-width="1.1"/><rect x="908.4" y="338.4" width="6.4" height="4.6" rx="0.8" fill="#e08050" stroke="#c05a30" stroke-width="0.6"/><rect x="911" y="339.6" width="1.2" height="2.2" fill="#fff"/>
<path d="M908 360l6-5.6" stroke="#555" stroke-width="0.9"/><path d="M909.8 361.4l6-5.6" stroke="#d86a4a" stroke-width="0.9"/>
<path d="M908.4 375.8l7-5.4" stroke="#666" stroke-width="0.9"/><path d="M908.6 373.2l4 5.2" stroke="#d86a4a" stroke-width="0.9"/>
<path d="M911.6 388.6v6" stroke="#e04848" stroke-width="2"/><path d="M908.6 395.6h6.2" stroke="#e04848" stroke-width="1.4"/><path d="M910 394.2h3.4" stroke="#555" stroke-width="0.8"/>
<circle cx="910.8" cy="412.6" r="2.9" fill="none" stroke="#d8663c" stroke-width="1"/><path d="M910.6 407.2l5 5.4" stroke="#555" stroke-width="0.8"/>
<path d="M907.4 427.2c3 0.4 4.6 1.6 6 5" fill="none" stroke="#222" stroke-width="1"/><path d="M909.8 425.6l5.6 5.6" stroke="#e02020" stroke-width="1.3"/><circle cx="912.8" cy="429" r="1.1" fill="#e02020"/>
</g>
<line x1="836" y1="433.5" x2="998" y2="433.5" stroke="#e2e2e2"/>
<rect x="993.6" y="119" width="1.6" height="314" fill="#cfcfcf"/><rect x="993.8" y="164" width="2.8" height="237" fill="#666"/>
<rect x="945.5" y="438.5" width="46" height="13" fill="#ececec" stroke="#c4c4c4" stroke-width="1"/>
<text x="947.9" y="447.8" font-size="8" fill="#555" textLength="40.8" lengthAdjust="spacingAndGlyphs" >Stop Sketch</text>
<rect x="428" y="441" width="144" height="14.5" fill="#f0f0f0"/>
<path d="M435.2 443.8l1.8 2.6l2.8 2l-2.8 2l-1.8 2.6l-1.8-2.6l-2.8-2l2.8-2z" fill="#f4f4f6" stroke="#6a6e7c" stroke-width="0.9" stroke-linejoin="round"/>
<ellipse cx="435.2" cy="448.4" rx="4.4" ry="1.6" fill="none" stroke="#8a8e9c" stroke-width="0.7"/>
<rect x="433.8" y="447.6" width="2.2" height="1.6" fill="#3a8af0"/>
<path d="M442.90000000000003 447.0h3.8l-1.9 2.4z" fill="#222"/>
<path d="M451.6 447.4l1.2-2h1.6l0.6 1h2l0.6-1h1.2l0.6 2z" fill="#8a8e9a"/>
<rect x="450.6" y="447.2" width="8.6" height="5.2" rx="0.8" fill="#b8bcc6" stroke="#70747f" stroke-width="0.8"/>
<path d="M451.6 449.2h6.6M452.4 451h5" stroke="#5a5e6a" stroke-width="0.8"/>
<path transform="translate(0.8 0.2)" d="M466.2 449.4v-3.2c0-0.8 1.1-0.8 1.1 0v-1c0-0.8 1.2-0.8 1.2 0v0.2c0-0.8 1.2-0.8 1.2 0v0.6c0-0.8 1.2-0.8 1.2 0v4.2c0 1.6-1 3-2.4 3h-1.6c-0.8 0-1.4-0.4-1.9-1.2l-1.6-2.4c-0.5-0.8 0.6-1.3 1.1-0.7z" fill="#f6f6f6" stroke="#4a4e5a" stroke-width="0.9" stroke-linejoin="round"/>
<circle cx="480.4" cy="448" r="2.5" fill="#e6f0fa" stroke="#70747f" stroke-width="1"/><path d="M482.4 450l2.4 2.4" stroke="#333" stroke-width="1.5" stroke-linecap="round"/>
<path d="M485 444.6v2.6M484.2 445.2h1.6M484.2 446.8h1.6" stroke="#555" stroke-width="0.6"/>
<circle cx="494.4" cy="447.8" r="3.2" fill="#d8dde6" stroke="#70747f" stroke-width="1.1"/><circle cx="494.4" cy="447.8" r="1.6" fill="none" stroke="#8a8e9a" stroke-width="0.7"/><path d="M496.8 450.4l2.8 2.8" stroke="#333" stroke-width="1.6" stroke-linecap="round"/>
<path d="M503.3 447.0h3.8l-1.9 2.4z" fill="#222"/>
<path d="M517.6 451h4l0.8 2.2h-5.6z" fill="#8e929c"/><rect x="515.4" y="444.8" width="8.4" height="6.4" rx="0.8" fill="#8db3ea" stroke="#858892" stroke-width="1.1"/>
<path d="M525.7 447.0h3.8l-1.9 2.4z" fill="#222"/>
<defs><linearGradient id="vs" x1="0" y1="0" x2="0" y2="1"><stop offset="0" stop-color="#bcbfc6"/><stop offset="1" stop-color="#868a92"/></linearGradient></defs>
<rect x="535" y="444.4" width="8.8" height="8.4" rx="0.6" fill="url(#vs)"/><path d="M539.4 444.4v8.4" stroke="#9a9ea6" stroke-width="0.6"/>
<path d="M545.5 447.0h3.8l-1.9 2.4z" fill="#222"/>
<rect x="555" y="445" width="8" height="6.8" rx="0.6" fill="#5a82c4"/><rect x="555.9" y="445.9" width="2.7" height="2.1" fill="#93b6ea"/><rect x="559.4" y="445.9" width="2.7" height="2.1" fill="#93b6ea"/><rect x="555.9" y="448.8" width="2.7" height="2.1" fill="#93b6ea"/><rect x="559.4" y="448.8" width="2.7" height="2.1" fill="#93b6ea"/>
<path d="M565.3000000000001 447.0h3.8l-1.9 2.4z" fill="#222"/>
<defs><linearGradient id="bb" x1="0" y1="0" x2="0" y2="1"><stop offset="0" stop-color="#6a6a6a"/><stop offset="1" stop-color="#4a4a4a"/></linearGradient></defs>
<rect x="0" y="456" width="1000" height="1" fill="#9c9c9c"/><rect x="0" y="457" width="1000" height="2" fill="#696969"/>
</svg>
</body></html>
